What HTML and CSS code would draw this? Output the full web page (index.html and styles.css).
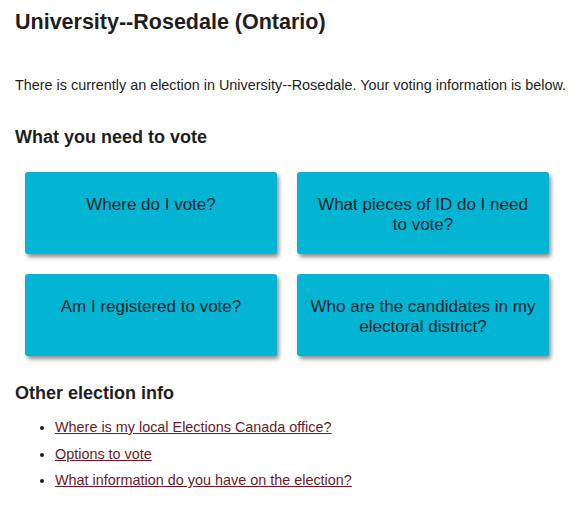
FILE: index.html
```html
<!DOCTYPE html>
<html lang="en">
<head>
  <meta charset="UTF-8" />
  <title>University--Rosedale (Ontario)</title>
  <link rel="stylesheet" href="styles.css">
</head>
<body>
  <!-- RIDING HEADER -->
  <h1 class="riding">University--Rosedale (Ontario)</h1>
  <p class="intro">There is currently an election in University--Rosedale. Your voting information is below.</p>

  <!-- WHAT YOU NEED -->
  <h2>What you need to vote</h2>
  <div class="tiles">
    <a class="tile" href="#where">Where do I vote?</a>
    <a class="tile" href="#id">What pieces of ID do I need to vote?</a>
    <a class="tile" href="#registered">Am I registered to vote?</a>
    <a class="tile" href="#candidates">Who are the candidates in my electoral district?</a>
  </div>

  <!-- OTHER INFO -->
  <h2 class="other">Other election info</h2>
  <ul class="links">
    <li><a href="#office">Where is my local Elections Canada office?</a></li>
    <li><a href="#options">Options to vote</a></li>
    <li><a href="#info">What information do you have on the election?</a></li>
  </ul>
</body>
</html>
```

FILE: styles.css
```css
/* BASE */
body {
  margin: 0;
  padding: 0 0 0 15px;
  font-family: "Liberation Sans", Arial, sans-serif;
  color: #1e1e1e;
  background: #fff;
}

.riding {
  font-size: 21.5px;
  font-weight: 700;
  margin: 10px 0 0;
  line-height: 24px;
}

.intro {
  font-size: 14.4px;
  margin: 42px 0 0;
  line-height: 18px;
  white-space: nowrap;
}

h2 {
  font-size: 18px;
  font-weight: 700;
  margin: 32px 0 0;
  line-height: 22px;
}
h2.other { margin-top: 26px; }

/* TILES */
.tiles {
  display: grid;
  grid-template-columns: 252px 252px;
  gap: 20px;
  padding-left: 10px;
  margin: 24px 0 0;
}
.tile {
  display: block;
  height: 82px;
  box-sizing: border-box;
  padding: 23px 13px 0;
  background: #03b5d2;
  border-radius: 3px;
  box-shadow: 2px 3px 4px rgba(0, 0, 0, 0.45);
  color: #14232b;
  text-decoration: none;
  text-align: center;
  font-size: 17px;
  line-height: 20px;
}

/* LINKS */
.links {
  margin: 10px 0 0;
  padding-left: 40px;
  font-size: 14.4px;
}
.links li {
  line-height: 26.7px;
}
.links a {
  color: #6a1b26;
}
```
